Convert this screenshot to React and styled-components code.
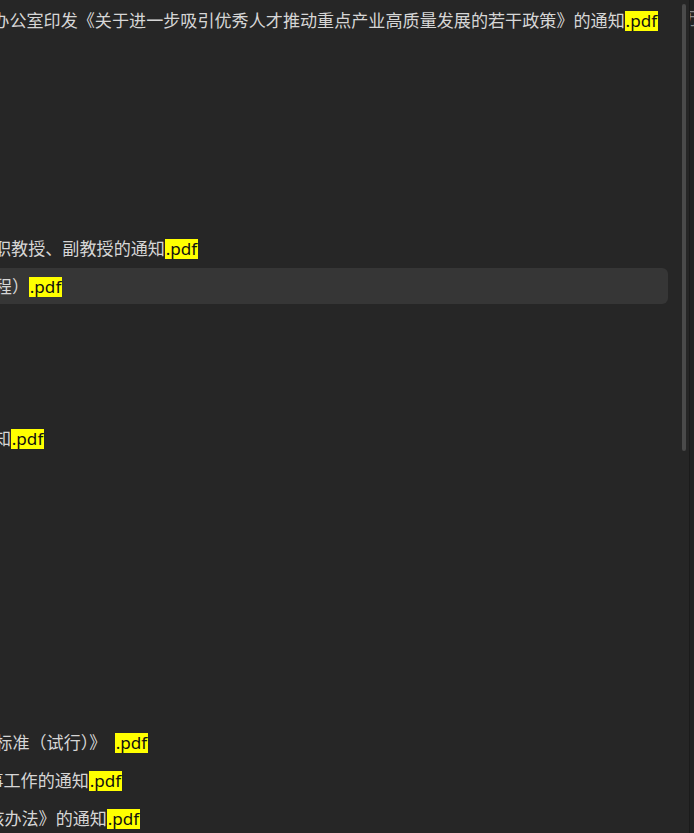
import React from "react";
import styled, { createGlobalStyle } from "styled-components";

const Global = createGlobalStyle`
  html, body { margin: 0; padding: 0; background: #262626; }
  body { font-family: "Noto Sans", "Noto Sans CJK SC", sans-serif; }
  #root { height: 100vh; }
`;

const Window = styled.div`
  display: flex;
  height: 100vh;
  width: 100%;
  overflow: hidden;
  background: #262626;
`;

const ListPane = styled.div`
  position: relative;
  flex: 1;
  min-width: 0;
  overflow: hidden;
`;

const List = styled.ul`
  list-style: none;
  margin: 0 0 0 -40px;
  padding: 2px 21px 0 0;
  display: flex;
  flex-direction: column;
  gap: 2px;
`;

const Row = styled.li`
  height: 36px;
  display: flex;
  align-items: center;
  border-radius: 6px;
  background: ${(p) => (p.$active ? "#363636" : "transparent")};
  white-space: nowrap;
  overflow: hidden;
`;

const Name = styled.span`
  margin-left: ${(p) => 40 + p.$offset}px;
  padding-top: 1px;
  font-size: 17.1px;
  line-height: 20px;
  color: #d6d6d6;
  display: flex;
  align-items: center;
  white-space: pre;
`;

const Ext = styled.mark`
  display: inline-block;
  background: #ffff00;
  color: #111;
  height: 20px;
  line-height: 20px;
  padding: 0 0.8px;
`;

const Thumb = styled.div`
  position: absolute;
  top: 4px;
  right: 3px;
  width: 4px;
  height: 447px;
  border-radius: 2px;
  background: #4a4a4a;
`;

const Divider = styled.div`
  width: 1px;
  background: #1b1b1b;
`;

const SidePane = styled.div`
  width: 4px;
  overflow: hidden;
  background: #232323;
  padding-top: 9px;
`;

const SideText = styled.span`
  display: block;
  font-size: 17px;
  line-height: 20px;
  color: #8a8a8a;
  white-space: nowrap;
  margin-left: -9px;
`;

const rows = [
  { name: "办公室印发《关于进一步吸引优秀人才推动重点产业高质量发展的若干政策》的通知", offset: -7.7 },
  null, null, null, null, null,
  { name: "职教授、副教授的通知", offset: -6 },
  { name: "程）", offset: -5.2, active: true },
  null, null, null,
  { name: "知", offset: -6.1 },
  null, null, null, null, null, null, null,
  { name: "标准（试行）》\u2002", offset: -4.7 },
  { name: "事工作的通知", offset: -13.6 },
  { name: "核办法》的通知", offset: -12.7 },
];

export default function App() {
  return (
    <>
      <Global />
      <Window>
        <ListPane>
          <List>
            {rows.map((r, i) => (
              <Row key={i} $active={r && r.active}>
                {r && (
                  <Name $offset={r.offset}>
                    {r.name}
                    <Ext>.pdf</Ext>
                  </Name>
                )}
              </Row>
            ))}
          </List>
          <Thumb />
        </ListPane>
        <Divider />
        <SidePane>
          <SideText>历史</SideText>
        </SidePane>
      </Window>
    </>
  );
}
